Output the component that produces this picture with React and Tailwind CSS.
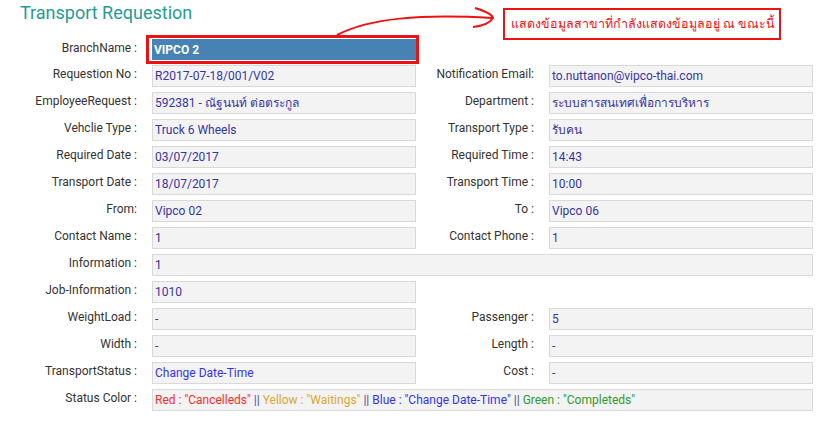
import React from "react";

const leftRows = [
  { label: "Requestion No :", value: "R2017-07-18/001/V02", right: { label: "Notification Email:", value: "to.nuttanon@vipco-thai.com" } },
  { label: "EmployeeRequest :", value: "592381 - ณัฐนนท์ ต่อตระกูล", right: { label: "Department :", value: "ระบบสารสนเทศเพื่อการบริหาร" } },
  { label: "Vehclie Type :", value: "Truck 6 Wheels", right: { label: "Transport Type :", value: "รับคน" } },
  { label: "Required Date :", value: "03/07/2017", right: { label: "Required Time :", value: "14:43" } },
  { label: "Transport Date :", value: "18/07/2017", right: { label: "Transport Time :", value: "10:00" } },
  { label: "From:", value: "Vipco 02", right: { label: "To :", value: "Vipco 06" } },
  { label: "Contact Name :", value: "1", right: { label: "Contact Phone :", value: "1" } },
  { label: "Information :", value: "1", wide: true },
  { label: "Job-Information :", value: "1010" },
  { label: "WeightLoad :", value: "-", right: { label: "Passenger :", value: "5" } },
  { label: "Width :", value: "-", right: { label: "Length :", value: "-" } },
  { label: "TransportStatus :", value: "Change Date-Time", status: true, right: { label: "Cost :", value: "-" } },
];

const Label = ({ children, className }) => (
  <div className={`text-right text-[12px] leading-[16px] pt-[1px] text-[#333] whitespace-nowrap ${className}`}>
    {children}
  </div>
);

const Field = ({ children, className, textClass = "text-[#3535a5]" }) => (
  <div
    className={`h-[22px] flex items-center pl-[2px] bg-[#f3f3f3] border border-[#d9d9d9] text-[12px] whitespace-nowrap overflow-hidden ${textClass} ${className}`}
  >
    {children}
  </div>
);

export default function App() {
  return (
    <div className="relative w-[827px] h-[428px] bg-white overflow-hidden font-['Roboto','Noto_Sans',sans-serif]">
      <h1 className="pl-5 pt-[2px] text-[18px] leading-[22px] text-[#1f9d93]">Transport Requestion</h1>

      {/* annotation */}
      <div className="absolute left-[503px] top-[8px] w-[278px] h-[32px] border-2 border-[#ee1111] flex items-center pl-[6px] text-[12.5px] text-[#ee1111] whitespace-nowrap overflow-hidden">
        แสดงข้อมูลสาขาที่กำลังแสดงข้อมูลอยู่ ณ ขณะนี้
      </div>
      <svg className="absolute left-0 top-0" width="827" height="60" fill="none">
        <path d="M337 35 C 370 18, 420 14, 492 18" stroke="#ee1111" strokeWidth="2" />
        <path d="M475 8 C 485 11, 492 14, 493 18 C 490 23, 482 26, 473 27" stroke="#ee1111" strokeWidth="2" />
      </svg>

      <div className="mt-[15px] flex flex-col gap-[5px]">
        <div className="flex">
          <Label className="w-[137px]">BranchName :</Label>
          <div className="relative ml-[15px] w-[264px]">
            <div className="h-[21px] flex items-center pl-[2px] bg-[#4682b4] text-white font-bold text-[12px]">VIPCO 2</div>
            <div className="absolute -left-[6px] -top-[4px] -right-[3px] -bottom-[4px] border-[3px] border-[#ee1111]" />
          </div>
        </div>

        {leftRows.map((r) => (
          <div key={r.label} className="flex">
            <Label className="w-[137px]">{r.label}</Label>
            <Field
              className={r.wide ? "ml-[15px] w-[661px]" : "ml-[15px] w-[264px]"}
              textClass={r.status ? "text-[#3434f4]" : "text-[#3535a5]"}
            >
              {r.value}
            </Field>
            {r.right && (
              <>
                <Label className="w-[118px]">{r.right.label}</Label>
                <Field className="ml-[15px] w-[264px]">{r.right.value}</Field>
              </>
            )}
          </div>
        ))}

        <div className="flex">
          <Label className="w-[137px]">Status Color :</Label>
          <Field className="ml-[15px] w-[661px]" textClass="text-[#4a4aa8]">
            <span className="text-[#ff2a2a]">Red : "Cancelleds"</span>
            <span className="mx-[3px]">||</span>
            <span className="text-[#dba730]">Yellow : "Waitings"</span>
            <span className="mx-[3px]">||</span>
            <span className="text-[#3434f4]">Blue : "Change Date-Time"</span>
            <span className="mx-[3px]">||</span>
            <span className="text-[#2f9a2f]">Green : "Completeds"</span>
          </Field>
        </div>
      </div>
    </div>
  );
}
